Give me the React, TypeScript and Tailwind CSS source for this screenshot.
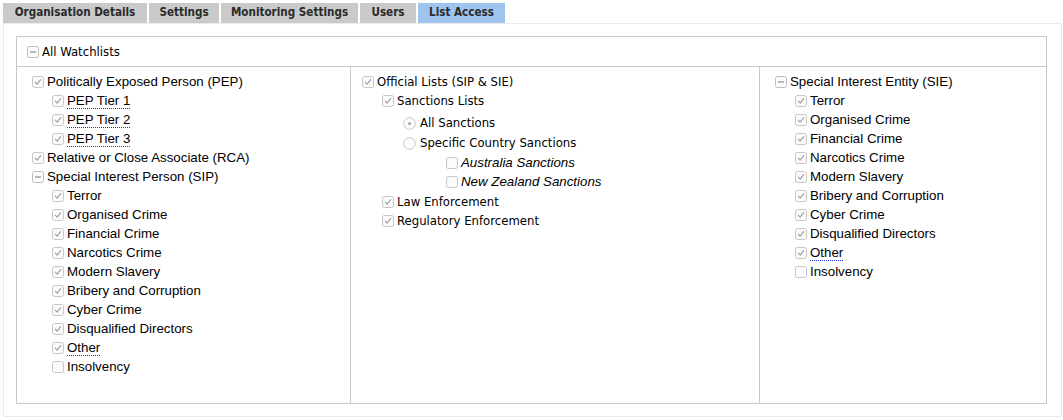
import type { ReactNode } from 'react';

const ARIAL = 'font-["Liberation_Sans",Arial,sans-serif] text-[13.3px]';
const TAHOMA = 'font-["DejaVu_Sans_Condensed","DejaVu_Sans",Tahoma,sans-serif] text-[13px]';

const tabs = [
  { label: 'Organisation Details', width: 'w-[144px]' },
  { label: 'Settings', width: 'w-[70px]' },
  { label: 'Monitoring Settings', width: 'w-[137px]' },
  { label: 'Users', width: 'w-[56px]' },
  { label: 'List Access', width: 'w-[87px]', active: true },
];

function Box({ checked = true }: { checked?: boolean }) {
  return (
    <svg width="12" height="12" viewBox="0 0 12 12" className="mr-[3px] shrink-0">
      <rect x="0.5" y="0.5" width="11" height="11" rx="2" fill="#fbfbfb" stroke="#c6c6c6" />
      {checked && (
        <path d="M3.3 6.2 L5.1 8.1 L8.7 3.6" fill="none" stroke="#9d9d9d" strokeWidth="1.1" strokeLinecap="round" strokeLinejoin="round" />
      )}
    </svg>
  );
}

function Minus() {
  return (
    <svg width="12" height="12" viewBox="0 0 12 12" className="mr-[3px] shrink-0">
      <rect x="0.5" y="0.5" width="11" height="11" rx="2" fill="#fbfbfb" stroke="#bdbdbd" />
      <path d="M3 6 H9" stroke="#8c8c8c" strokeWidth="1.2" />
    </svg>
  );
}

function Radio({ checked = false }: { checked?: boolean }) {
  return (
    <svg width="13" height="13" viewBox="0 0 13 13" className="mr-[4px] shrink-0">
      <circle cx="6.5" cy="6.5" r="5.8" fill="#fcfcfc" stroke="#c6c6c6" />
      {checked && <circle cx="6.5" cy="6.5" r="1.6" fill="#a6a6a6" />}
    </svg>
  );
}

function Row({ children, className = '' }: { children: ReactNode; className?: string }) {
  return <div className={`flex h-[19px] items-center ${className}`}>{children}</div>;
}

function Abbr({ children }: { children: ReactNode }) {
  return <span className="border-b border-dotted border-[#1f2fd0] leading-[15px]">{children}</span>;
}

const categories = [
  'Terror',
  'Organised Crime',
  'Financial Crime',
  'Narcotics Crime',
  'Modern Slavery',
  'Bribery and Corruption',
  'Cyber Crime',
  'Disqualified Directors',
];

function CategoryList() {
  return (
    <div className="pl-[20px]">
      {categories.map((c) => (
        <Row key={c}>
          <Box />
          {c}
        </Row>
      ))}
      <Row>
        <Box />
        <Abbr>Other</Abbr>
      </Row>
      <Row>
        <Box checked={false} />
        Insolvency
      </Row>
    </div>
  );
}

export default function App() {
  return (
    <div className="h-[420px] w-[1063px] bg-white pt-[3px] text-black">
      <div className={`flex gap-[2px] pl-[3px] ${TAHOMA}`}>
        {tabs.map((t) => (
          <div
            key={t.label}
            className={`flex h-[20px] items-center justify-center text-[11.6px] font-bold text-[#2b2b2b] ${t.width} ${
              t.active ? 'bg-[#9fc5ef]' : 'bg-[#cacaca]'
            }`}
          >
            {t.label}
          </div>
        ))}
      </div>

      <div className="ml-[3px] h-[394px] w-[1059px] border border-[#ebebeb] pb-[12px] pl-[12px] pr-[14px] pt-[12px]">
        <div className="flex h-full flex-col border border-[#c8c8c8]">
          <div className={`flex h-[30px] shrink-0 items-center border-b border-[#c8c8c8] pl-[10px] ${TAHOMA}`}>
            <Minus />
            All Watchlists
          </div>

          <div className={`grid flex-1 grid-cols-[334px_409px_1fr] ${ARIAL}`}>
            <div className="border-r border-[#c8c8c8] pl-[15px] pt-[5px]">
              <Row>
                <Box />
                Politically Exposed Person (PEP)
              </Row>
              <div className="pl-[20px]">
                {['PEP Tier 1', 'PEP Tier 2', 'PEP Tier 3'].map((t) => (
                  <Row key={t}>
                    <Box />
                    <Abbr>{t}</Abbr>
                  </Row>
                ))}
              </div>
              <Row>
                <Box />
                Relative or Close Associate (RCA)
              </Row>
              <Row>
                <Minus />
                Special Interest Person (SIP)
              </Row>
              <CategoryList />
            </div>

            <div className={`border-r border-[#c8c8c8] pl-[11px] pt-[5px] ${TAHOMA}`}>
              <Row>
                <Box />
                Official Lists (SIP &amp; SIE)
              </Row>
              <div className="pl-[20px]">
                <Row>
                  <Box />
                  Sanctions Lists
                </Row>
                <div className="pl-[21px]">
                  <div className="flex h-[23px] items-center pt-[3px]">
                    <Radio checked />
                    All Sanctions
                  </div>
                  <div className="flex h-[20px] items-center">
                    <Radio />
                    Specific Country Sanctions
                  </div>
                  <div className={`pl-[43px] italic ${ARIAL}`}>
                    <div className="flex h-[19px] items-center">
                      <Box checked={false} />
                      Australia Sanctions
                    </div>
                    <div className="flex h-[20px] items-center">
                      <Box checked={false} />
                      New Zealand Sanctions
                    </div>
                  </div>
                </div>
                <Row>
                  <Box />
                  Law Enforcement
                </Row>
                <Row>
                  <Box />
                  Regulatory Enforcement
                </Row>
              </div>
            </div>

            <div className="pl-[15px] pt-[5px]">
              <Row>
                <Minus />
                Special Interest Entity (SIE)
              </Row>
              <CategoryList />
            </div>
          </div>
        </div>
      </div>
    </div>
  );
}
